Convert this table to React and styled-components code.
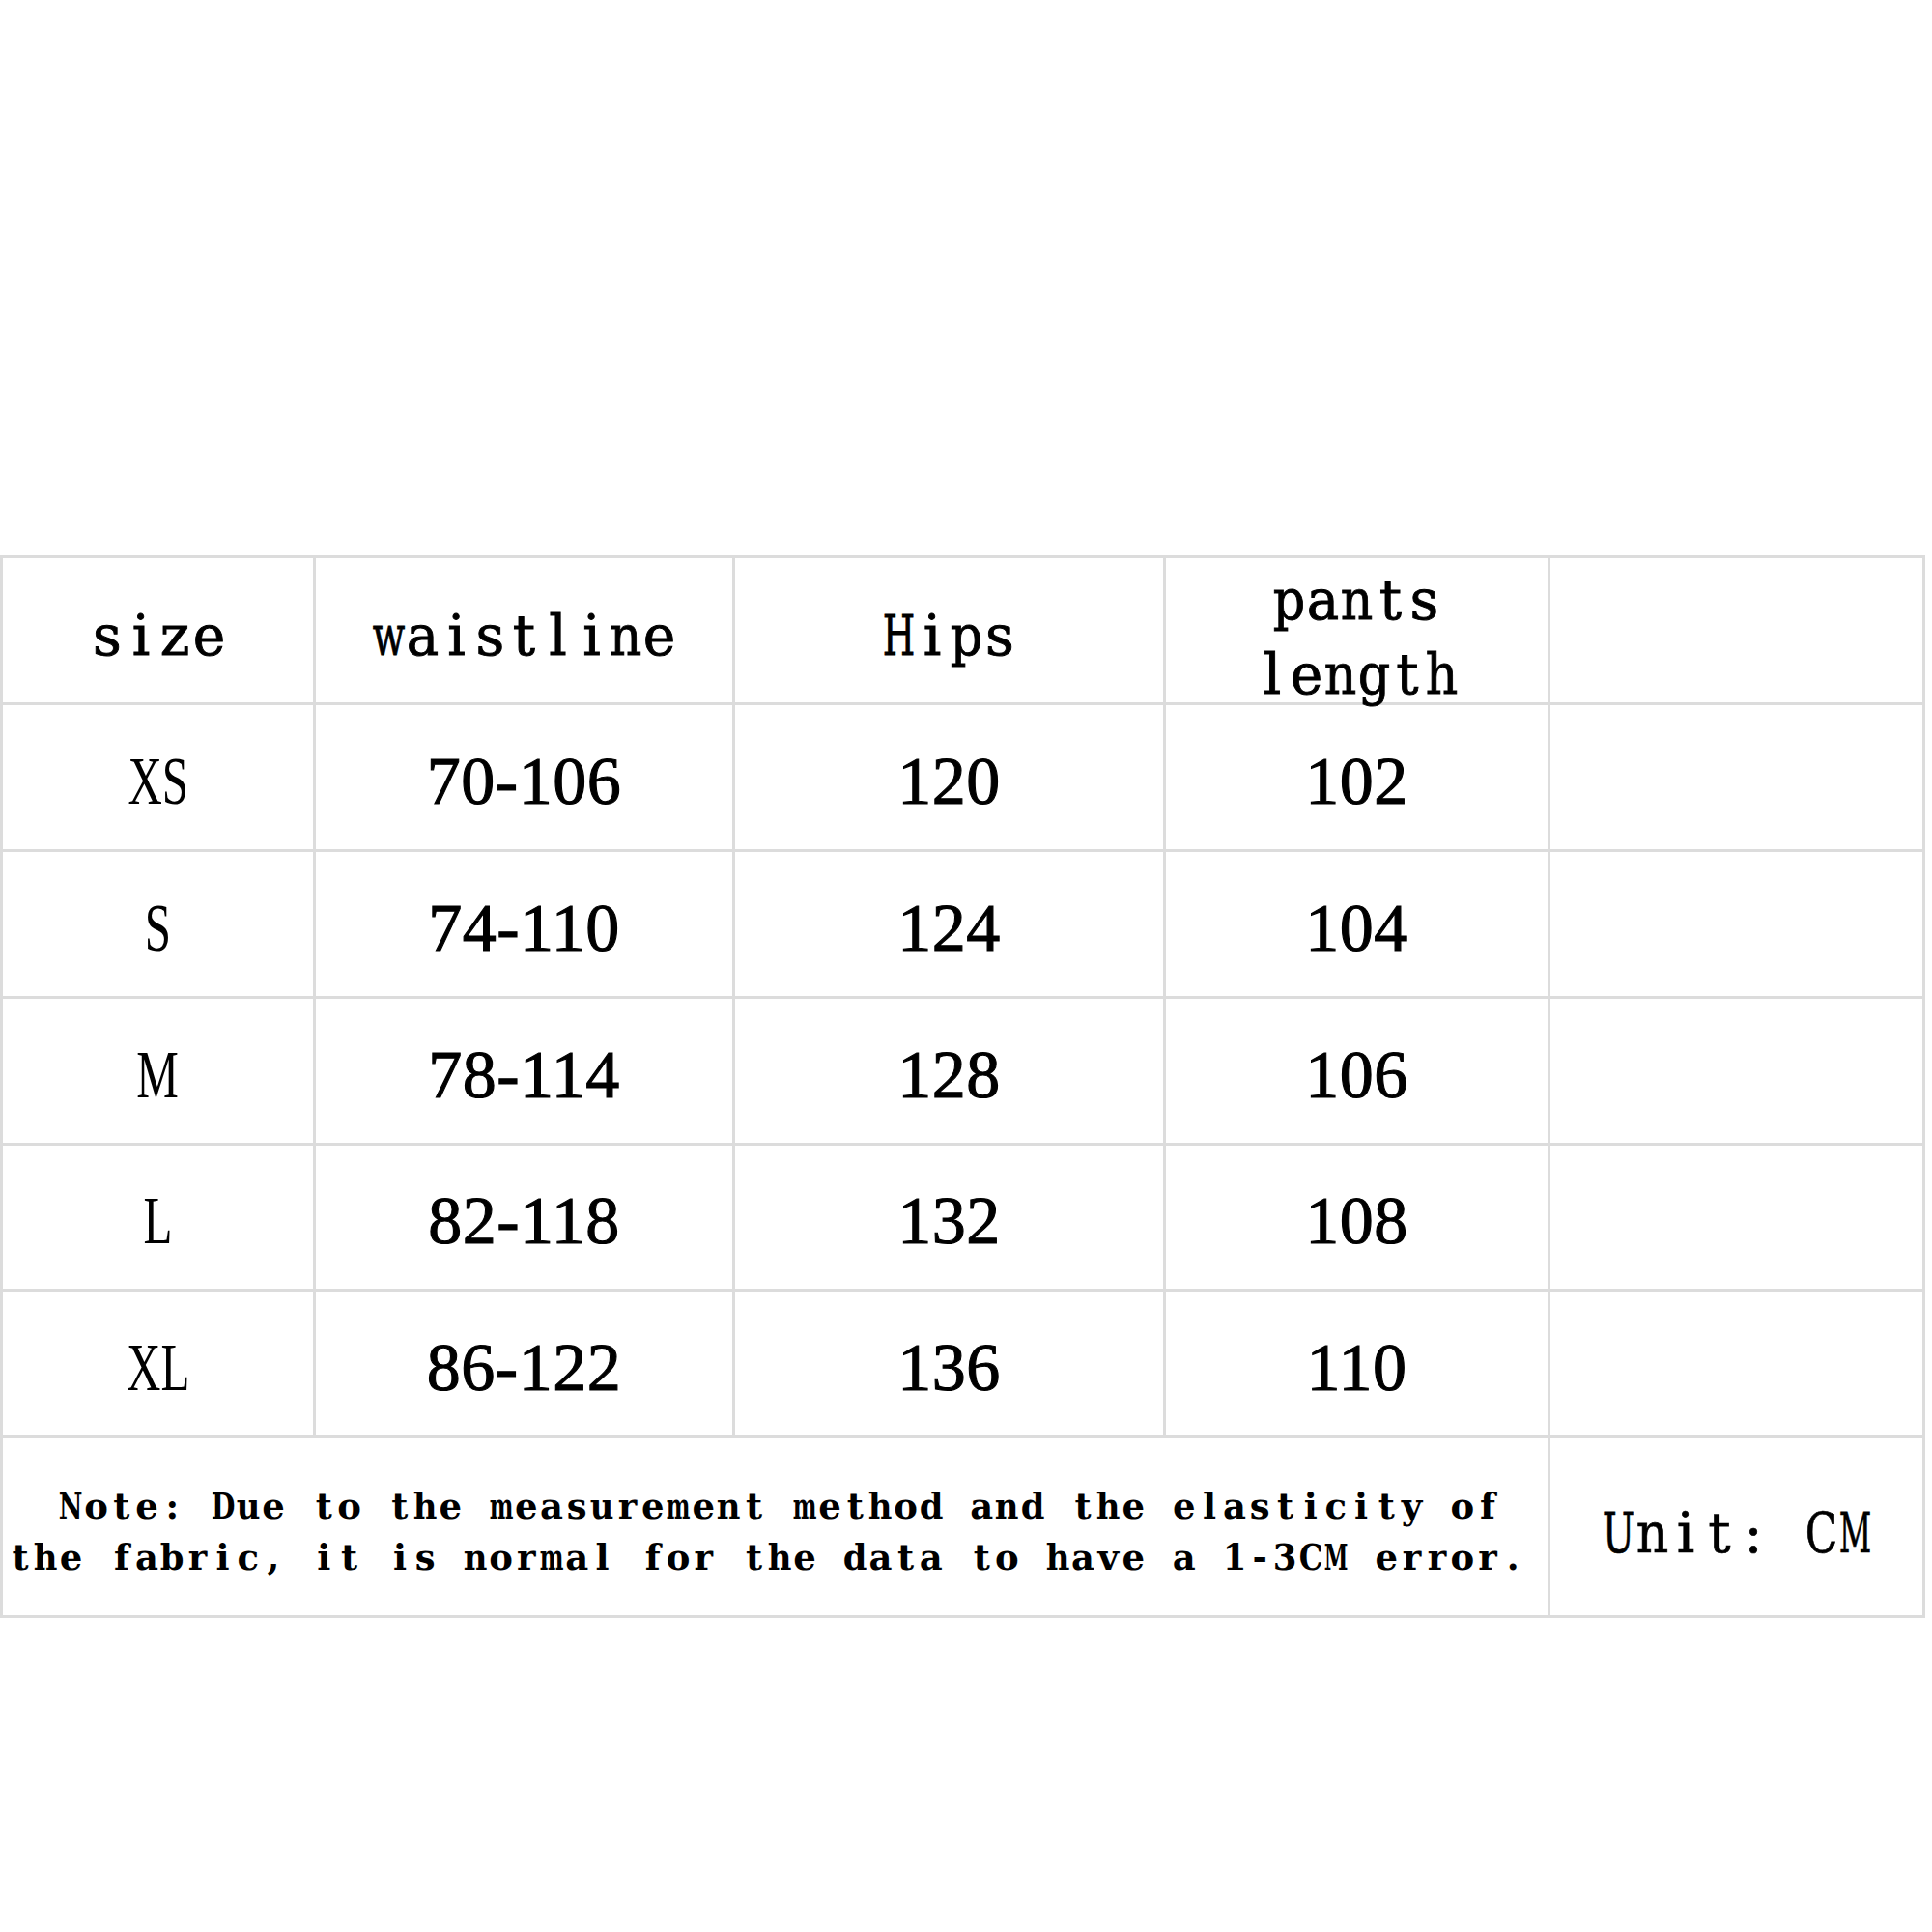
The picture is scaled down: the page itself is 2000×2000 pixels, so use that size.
import React, { useMemo } from "react";
import styled, { createGlobalStyle } from "styled-components";

const GlobalStyle = createGlobalStyle`
  html, body {
    margin: 0;
    padding: 0;
    background: #ffffff;
  }
`;

const Page = styled.div`
  box-sizing: border-box;
  min-height: 2000px;
  padding-top: 575px;
  background: #ffffff;
`;

const SizeGrid = styled.div`
  display: grid;
  width: max-content;
  grid-template-columns: 321px 431px 443px 395px 385px;
  grid-template-rows: 149px 149px 149px 149px 148px 149px 183px;
  gap: 3px;
  padding: 3px;
  background: #dcdcdc;
`;

const Cell = styled.div`
  background: #ffffff;
  display: flex;
  align-items: center;
  justify-content: center;
  text-align: center;
  color: #000;
  min-width: 0;
`;

const NoteCell = styled(Cell)`
  grid-column: span 4;
  flex-direction: column;
  align-items: flex-start;
  justify-content: center;
  padding-left: 5px;
  text-align: left;
`;

const MONO_FAMILY = `"DejaVu Serif", "Liberation Serif", serif`;

/* Serif text laid out on a fixed character pitch (like a CJK system font's Latin) */
const MonoBlock = styled.div`
  font-family: ${MONO_FAMILY};
  font-size: ${(p) => p.$size}px;
  font-weight: ${(p) => (p.$bold ? 700 : 400)};
  line-height: ${(p) => p.$lineHeight}px;
  margin-top: ${(p) => p.$shift || 0}px;
  -webkit-text-stroke: ${(p) => p.$stroke || 0}px #000;
  color: #000;
  white-space: nowrap;
`;

const MonoLine = styled.div`
  display: flex;
  justify-content: ${(p) => (p.$left ? "flex-start" : "center")};
`;

const Glyph = styled.span`
  display: inline-flex;
  justify-content: center;
  flex: 0 0 auto;
  width: ${(p) => p.$pitch}px;
  transform: scaleX(${(p) => p.$squeeze});
`;

const SizeLabel = styled.span`
  display: inline-block;
  font-family: "Liberation Serif", "Times New Roman", serif;
  font-size: 70px;
  line-height: 1;
  transform: scaleX(0.7);
  margin-top: 8px;
`;

const Value = styled.span`
  font-family: "Liberation Serif", "Times New Roman", serif;
  font-size: 70px;
  line-height: 1;
  margin-top: 8px;
  letter-spacing: 0.5px;
  -webkit-text-stroke: 1.1px #000;
`;

let measureCtx = null;
function glyphWidth(ch, size, bold) {
  if (typeof document === "undefined") return 0;
  if (!measureCtx) {
    const c = document.createElement("canvas");
    measureCtx = c.getContext("2d");
  }
  if (!measureCtx) return 0;
  measureCtx.font = `${bold ? "bold " : ""}${size}px "DejaVu Serif"`;
  return measureCtx.measureText(ch).width;
}

function MonoText({ lines, size, pitch, lineHeight, bold, left, shift, stroke }) {
  const squeezed = useMemo(
    () =>
      lines.map((line) =>
        Array.from(line).map((ch) => {
          const w = ch === " " ? 0 : glyphWidth(ch, size, bold);
          const room = pitch - 1.5;
          return { ch, squeeze: w > room ? (room / w).toFixed(3) : "1" };
        })
      ),
    [lines, size, pitch, bold]
  );
  return (
    <MonoBlock $size={size} $bold={bold} $lineHeight={lineHeight} $shift={shift} $stroke={stroke}>
      {squeezed.map((line, li) => (
        <MonoLine key={li} $left={left}>
          {line.map((g, ci) => (
            <Glyph key={ci} $pitch={pitch} $squeeze={g.squeeze}>
              {g.ch === " " ? "\u00a0" : g.ch}
            </Glyph>
          ))}
        </MonoLine>
      ))}
    </MonoBlock>
  );
}

const headers = [["size"], ["waistline"], ["Hips"], ["pants", "length"], null];

const rows = [
  ["XS", "70-106", "120", "102"],
  ["S", "74-110", "124", "104"],
  ["M", "78-114", "128", "106"],
  ["L", "82-118", "132", "108"],
  ["XL", "86-122", "136", "110"],
];

const NOTE_LINES = [
  "  Note: Due to the measurement method and the elasticity of",
  "the fabric, it is normal for the data to have a 1-3CM error.",
];
const UNIT_LINES = ["Unit: CM"];

export default function App() {
  return (
    <>
      <GlobalStyle />
      <Page>
        <SizeGrid>
          {headers.map((h, i) => (
            <Cell key={`h${i}`}>
              {h && (
                <MonoText
                  lines={h}
                  size={58}
                  pitch={35}
                  lineHeight={h.length > 1 ? 77 : 71}
                  shift={h.length > 1 ? 14 : 11}
                  stroke={0.9}
                />
              )}
            </Cell>
          ))}
          {rows.map((r) => (
            <React.Fragment key={r[0]}>
              <Cell>
                <SizeLabel>{r[0]}</SizeLabel>
              </Cell>
              <Cell>
                <Value>{r[1]}</Value>
              </Cell>
              <Cell>
                <Value>{r[2]}</Value>
              </Cell>
              <Cell>
                <Value>{r[3]}</Value>
              </Cell>
              <Cell />
            </React.Fragment>
          ))}
          <NoteCell>
            <MonoText lines={NOTE_LINES} size={37} pitch={26.2} lineHeight={53} bold left shift={10} />
          </NoteCell>
          <Cell>
            <MonoText lines={UNIT_LINES} size={58} pitch={35} lineHeight={71} shift={13} stroke={0.7} />
          </Cell>
        </SizeGrid>
      </Page>
    </>
  );
}
